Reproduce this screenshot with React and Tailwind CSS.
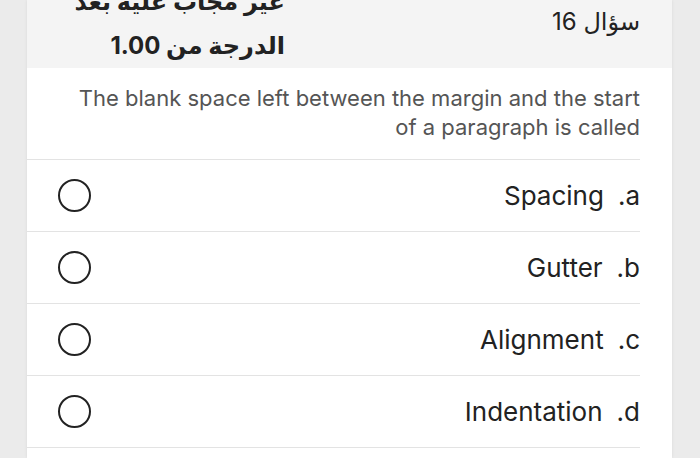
import React from "react";

const options = [
  { key: "a.", text: "Spacing" },
  { key: "b.", text: "Gutter" },
  { key: "c.", text: "Alignment" },
  { key: "d.", text: "Indentation" },
];

export default function App() {
  return (
    <div
      className="h-[458px] w-[700px] overflow-hidden bg-[#ebebeb]"
      style={{ fontFamily: "Inter, 'DejaVu Sans', sans-serif" }}
    >
      <div dir="rtl" className="ml-[27px] mr-[28px] h-full bg-white shadow-[0_0_3px_rgba(0,0,0,0.08)]">
        {/* question info */}
        <div className="h-[68px] bg-[#f4f4f4] pr-[32px] flex">
          <div className="w-[355px] shrink-0 text-[24px] leading-[30px] text-[#222] pt-[7px]">سؤال 16</div>
          <div className="-mt-[20px] text-[24px] leading-[44px] font-bold text-[#222] whitespace-nowrap">
            <div>غير مجاب عليه بعد</div>
            <div>الدرجة من 1.00</div>
          </div>
        </div>

        {/* question text */}
        <div className="mr-[32px] pl-[40px] pt-[16px] pb-[17px] border-b border-[#e3e3e3]">
          <p dir="ltr" className="text-right text-[22px] leading-[29px] text-[#555]">
            The blank space left between the margin and the start of a paragraph is called
          </p>
        </div>

        {/* answers */}
        <div className="mr-[32px]">
          {options.map((o) => (
            <div key={o.key} className="h-[72px] flex items-center border-b border-[#e3e3e3] pl-[31px]">
              <div className="flex items-center gap-[14px] text-[26px] text-[#222]">
                <span>{o.key}</span>
                <span>{o.text}</span>
              </div>
              <div className="mr-auto w-[33px] h-[33px] rounded-full border-2 border-[#222]" />
            </div>
          ))}
        </div>
      </div>
    </div>
  );
}
